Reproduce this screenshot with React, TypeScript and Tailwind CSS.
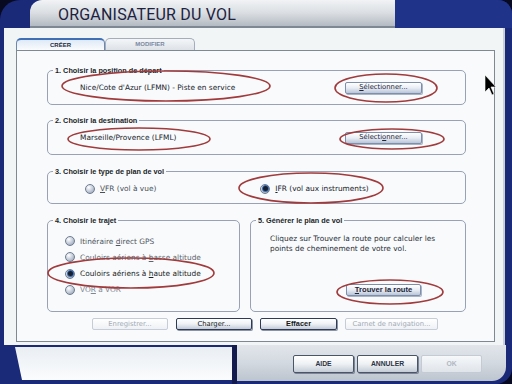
import React from "react";

const body = "font-['DejaVu_Sans',sans-serif] text-[7.4px] leading-[9px]";
const label = "font-['Liberation_Sans',Arial,sans-serif] font-bold text-[7.3px] leading-[9px] text-[#1a1e28]";

function Group({ title, className, children }: { title: string; className: string; children?: React.ReactNode }) {
  return (
    <div className={`relative border border-[#98a2b4] rounded-[5px] box-border ${className}`}>
      <span className={`absolute left-[5px] top-[-5px] bg-[#f8fafb] px-[2px] ${label}`}>{title}</span>
      {children}
    </div>
  );
}

function Radio({ on }: { on?: boolean }) {
  return (
    <span className="w-[10px] h-[10px] rounded-full border border-[#6f7c90] bg-[radial-gradient(circle_at_35%_30%,#ffffff,#b9c3d1_60%,#8795aa)] flex items-center justify-center shrink-0">
      {on && <span className="w-[5px] h-[5px] rounded-full bg-[#18202e] ring-1 ring-[#3d6db0]" />}
    </span>
  );
}

function Btn({ children, w, variant = "light", bold }: { children: React.ReactNode; w: string; variant?: "light" | "dark" | "disabled"; bold?: boolean }) {
  const v =
    variant === "dark"
      ? "border-[#2f3b55] border-[1.5px] bg-gradient-to-b from-[#ffffff] via-[#eef1f5] to-[#c3cbd8] text-[#141820] shadow-[1px_1px_0_#8a94a6]"
      : variant === "disabled"
      ? "border-[#c6cdd8] bg-gradient-to-b from-[#ffffff] to-[#eef1f5] text-[#a2aab6]"
      : "border-[#7f8eaa] bg-gradient-to-b from-[#ffffff] via-[#e8edf4] to-[#b9c5d8] text-[#1c2438] shadow-[1px_1px_0_#a9b4c6]";
  return (
    <div
      className={`${w} h-[12px] rounded-[2px] border flex items-center justify-center ${v} font-['DejaVu_Sans',sans-serif] text-[6.8px] leading-none ${bold ? "font-bold" : ""}`}
    >
      {children}
    </div>
  );
}

function FootBtn({ children, disabled }: { children: React.ReactNode; disabled?: boolean }) {
  return (
    <div
      className={`w-[61px] h-[18px] rounded-[2px] flex items-center justify-center font-['Liberation_Sans',Arial,sans-serif] font-bold text-[6.8px] ${
        disabled
          ? "border border-[#c4cbd5] bg-gradient-to-b from-[#f6f8fa] to-[#dfe4ea] text-[#b0b7c2]"
          : "border-[1.5px] border-[#4a5568] bg-gradient-to-b from-[#ffffff] via-[#eef1f4] to-[#c4ccd6] text-[#2c3444] shadow-[1px_1px_0_#7d8698]"
      }`}
    >
      {children}
    </div>
  );
}

export default function App() {
  return (
    <div className="relative w-[512px] h-[384px] overflow-hidden bg-[#070a20]">
      <div className="flex flex-col h-full bg-[#1b2a78] rounded-tl-[20px] rounded-tr-[14px] rounded-br-[16px]">
        {/* Title row */}
        <div className="flex h-[28px] shrink-0">
          <div className="w-[30px]" />
          <div className="flex-1 rounded-tl-[12px] bg-gradient-to-b from-[#f1f3f5] via-[#dadee2] to-[#b4bac2] border-b-2 border-[#7e8794] flex items-center pl-[28px]">
            <span className="font-['Roboto',sans-serif] text-[16px] leading-none text-[#1c2240] tracking-[0.2px] mt-[3px]">
              ORGANISATEUR DU VOL
            </span>
          </div>
          <div className="w-[117px] bg-[#1f3389] rounded-tr-[14px]" />
        </div>

        {/* Body */}
        <div className="ml-[4px] mr-[7px] h-[317px] shrink-0 bg-[#f1f5f6] border-r-2 border-[#c9d0d8] pl-[12px] pt-[10px] flex flex-col">
          {/* Tabs */}
          <div className="flex h-[12px]">
            <div className="w-[89px] h-[12px] rounded-t-[5px] border border-b-0 border-[#6f86ad] border-t-2 border-t-[#3f6fb4] bg-gradient-to-b from-[#dfe9f6] to-[#fafcfd] flex items-center justify-center">
              <span className="font-['Liberation_Sans',Arial,sans-serif] font-bold text-[6px] text-[#222a3a]">CRÉER</span>
            </div>
            <div className="w-[90px] h-[12px] rounded-t-[5px] border border-b-0 border-[#a4adbb] bg-gradient-to-b from-[#f4f6f8] to-[#dde2e8] flex items-center justify-center">
              <span className="font-['Liberation_Sans',Arial,sans-serif] font-bold text-[6px] text-[#7a88a2]">MODIFIER</span>
            </div>
          </div>

          {/* Panel */}
          <div className="w-[479px] h-[292px] border border-[#7f8994] bg-[#f8fafb] pt-[19px] pl-[30px] flex flex-col">
            <Group title="1. Choisir la position de départ" className="w-[419px] h-[35px] flex items-center justify-between pl-[32px] pr-[43px]">
              <span className={`${body} text-[#20242c]`}>Nice/Cote d'Azur (LFMN) - Piste en service</span>
              <Btn w="w-[77px]">
                <span><u>S</u>électionner...</span>
              </Btn>
            </Group>

            <Group title="2. Choisir la destination" className="mt-[15px] w-[419px] h-[35px] flex items-center justify-between pl-[32px] pr-[43px]">
              <span className={`${body} text-[#20242c]`}>Marseille/Provence (LFML)</span>
              <Btn w="w-[77px]">
                <span>Sélecti<u>o</u>nner...</span>
              </Btn>
            </Group>

            <Group title="3. Choisir le type de plan de vol" className="mt-[16px] w-[419px] h-[33px] flex items-center">
              <div className="flex items-center gap-[5px] ml-[37px] mt-[2px]">
                <Radio />
                <span className={`${body} text-[#4a505a]`}><u>V</u>FR (vol à vue)</span>
              </div>
              <div className="flex items-center gap-[5px] ml-[104px] mt-[2px]">
                <Radio on />
                <span className={`${body} text-[#20242c]`}><u>I</u>FR (vol aux instruments)</span>
              </div>
            </Group>

            <div className="flex gap-[10px] mt-[16px]">
              <Group title="4. Choisir le trajet" className="w-[193px] h-[92px] pl-[17px] pt-[15px] flex flex-col gap-[6.3px]">
                <div className="flex items-center gap-[5px]">
                  <Radio />
                  <span className={`${body} text-[#4e555e]`}>Itinéraire <u>d</u>irect GPS</span>
                </div>
                <div className="flex items-center gap-[5px]">
                  <Radio />
                  <span className={`${body} text-[#5d646e]`}>Couloirs aériens à <u>b</u>asse altitude</span>
                </div>
                <div className="flex items-center gap-[5px]">
                  <Radio on />
                  <span className={`${body} text-[#1a1e26]`}>Couloirs aériens à <u>h</u>aute altitude</span>
                </div>
                <div className="flex items-center gap-[5px]">
                  <Radio />
                  <span className={`${body} text-[#7f8794]`}>VO<u>R</u> à VOR</span>
                </div>
              </Group>

              <Group title="5. Générer le plan de vol" className="w-[216px] h-[92px] pl-[19px] pt-[13px] flex flex-col">
                <p className={`${body} text-[#2a2f38] leading-[10px]`}>
                  Cliquez sur Trouver la route pour calculer les
                  <br />
                  points de cheminement de votre vol.
                </p>
                <div className="mt-[30px] ml-[76px]">
                  <Btn w="w-[75px]" variant="light" bold>
                    <span className="font-['Liberation_Sans',Arial,sans-serif] text-[7.6px]"><u>T</u>rouver la route</span>
                  </Btn>
                </div>
              </Group>
            </div>

            <div className="flex gap-[8px] mt-[6px] ml-[45px]">
              <Btn w="w-[76px]" variant="disabled">Enregistrer...</Btn>
              <Btn w="w-[76px]" variant="dark">Charger...</Btn>
              <Btn w="w-[77px]" variant="dark" bold>
                <span className="font-['Liberation_Sans',Arial,sans-serif] text-[7.4px]">Effacer</span>
              </Btn>
              <Btn w="w-[93px]" variant="disabled">Carnet de navigation...</Btn>
            </div>
          </div>
        </div>

        {/* Footer */}
        <div className="flex flex-1 min-h-0">
          <div className="w-[15px]" />
          <div className="w-[217px] mt-[2px] mb-[4px] bg-gradient-to-b from-[#e9eef3] to-[#fbfcfd] [clip-path:polygon(0_0,100%_0,100%_100%,7px_100%)]" />
          <div className="w-[5px] bg-[#121a4e]" />
          <div className="flex-1 bg-gradient-to-b from-[#e2e6eb] via-[#d3d9e0] to-[#bcc4ce] mb-[3px] flex items-center justify-end gap-[3px] pr-[24px] pt-[2px] rounded-br-[14px]">
            <FootBtn>AIDE</FootBtn>
            <FootBtn>ANNULER</FootBtn>
            <FootBtn disabled>OK</FootBtn>
          </div>
          <div className="w-[6px]" />
        </div>
      </div>

      {/* Annotations overlay */}
      <svg className="absolute inset-0 pointer-events-none" width="512" height="384" viewBox="0 0 512 384">
        <g fill="none" stroke="#a13a3c" strokeWidth="1.6">
          <ellipse cx="166" cy="86" rx="104" ry="15" />
          <ellipse cx="386" cy="88" rx="51" ry="14" />
          <ellipse cx="139" cy="139" rx="71" ry="11" />
          <ellipse cx="392" cy="139" rx="52" ry="10" />
          <ellipse cx="311" cy="188" rx="72" ry="15" />
          <ellipse cx="131" cy="273" rx="83" ry="15" />
          <ellipse cx="390" cy="292" rx="53" ry="12" />
        </g>
        <path d="M485 75 L485 92 L489 88 L492 95 L494 94 L491 87 L496 87 Z" fill="#000" stroke="#fff" strokeWidth="0.6" />
      </svg>
    </div>
  );
}
